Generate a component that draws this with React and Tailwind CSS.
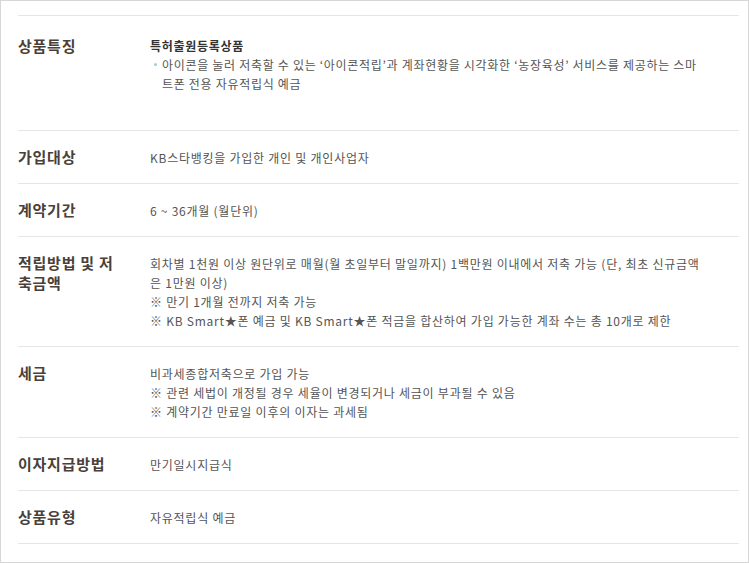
const rows = [
  {
    label: '가입대상',
    lines: ['KB스타뱅킹을 가입한 개인 및 개인사업자'],
  },
  {
    label: '계약기간',
    lines: ['6 ~ 36개월 (월단위)'],
  },
  {
    label: '적립방법 및 저축금액',
    lines: [
      '회차별 1천원 이상 원단위로 매월(월 초일부터 말일까지) 1백만원 이내에서 저축 가능 (단, 최초 신규금액',
      '은 1만원 이상)',
      '※ 만기 1개월 전까지 저축 가능',
      '※ KB Smart★폰 예금 및 KB Smart★폰 적금을 합산하여 가입 가능한 계좌 수는 총 10개로 제한',
    ],
  },
  {
    label: '세금',
    lines: [
      '비과세종합저축으로 가입 가능',
      '※ 관련 세법이 개정될 경우 세율이 변경되거나 세금이 부과될 수 있음',
      '※ 계약기간 만료일 이후의 이자는 과세됨',
    ],
  },
  {
    label: '이자지급방법',
    lines: ['만기일시지급식'],
  },
  {
    label: '상품유형',
    lines: ['자유적립식 예금'],
  },
];

function Label({ children }) {
  return (
    <div className="w-[132px] shrink-0 pr-[28px] text-[15px] leading-[20px] tracking-[0.75px] font-bold text-[#4a4039]">
      {children}
    </div>
  );
}

export default function App() {
  return (
    <div
      className="h-[563px] w-[749px] border border-[#d6d6d6] bg-white pt-[14px] pl-[17px] pr-[9px]"
      style={{ fontFamily: '"Noto Sans CJK KR", "Noto Sans", sans-serif' }}
    >
      <div className="border-t border-[#e6e6e6]">
        {/* 상품특징 */}
        <div className="flex h-[115px] border-b border-[#e6e6e6] pt-[20px]">
          <Label>상품특징</Label>
          <div className="text-[12px] leading-[19px] tracking-[0.7px] text-[#555]">
            <div className="font-bold text-[#333]">특허출원등록상품</div>
            <div className="relative pl-[12px] whitespace-nowrap">
              <span className="absolute left-[4px] top-[8px] h-[3px] w-[3px] rounded-full bg-[#9ccfd6]" />
              <div>아이콘을 눌러 저축할 수 있는 ‘아이콘적립’과 계좌현황을 시각화한 ‘농장육성’ 서비스를 제공하는 스마</div>
              <div>트폰 전용 자유적립식 예금</div>
            </div>
          </div>
        </div>

        {rows.map((row) => (
          <div
            key={row.label}
            className="flex border-b border-[#e6e6e6] pt-[16px] pb-[16px]"
          >
            <Label>{row.label}</Label>
            <div className="pt-px text-[12px] leading-[19px] tracking-[0.75px] text-[#555] whitespace-nowrap">
              {row.lines.map((line, i) => (
                <div key={i}>{line}</div>
              ))}
            </div>
          </div>
        ))}
      </div>
    </div>
  );
}
